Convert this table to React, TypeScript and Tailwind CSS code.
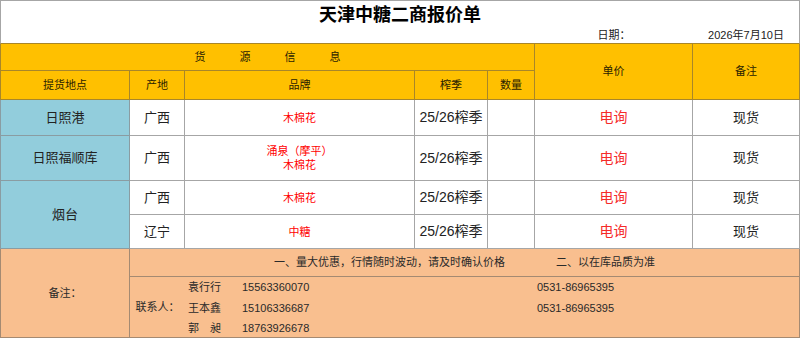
const brandRows = [
  { place: '日照港', origin: '广西', brand: ['木棉花'], h: 'h-[36px]', span: 1 },
  { place: '日照福顺库', origin: '广西', brand: ['涌泉（摩平）', '木棉花'], h: 'h-[45px]', span: 1 },
  { place: '烟台', origin: '广西', brand: ['木棉花'], h: 'h-[34px]', span: 2 },
  { place: '', origin: '辽宁', brand: ['中糖'], h: 'h-[34px]', span: 0 },
]

const contacts = [
  { name: '袁行行', mobile: '15563360070', phone: '0531-86965395', h: 'h-[21px]' },
  { name: '王本鑫', mobile: '15106336687', phone: '0531-86965395', h: 'h-[21px]' },
  { name: '郭　昶', mobile: '18763926678', phone: '', h: 'h-[18px]' },
]

export default function App() {
  return (
    <div className="w-[800px] h-[340px] overflow-hidden bg-white text-[#222] font-['Liberation_Sans','Noto_Sans_CJK_SC',sans-serif]">
      <table className="w-[800px] table-fixed border-separate border-spacing-0">
        <colgroup>
          <col className="w-[130px]" />
          <col className="w-[55px]" />
          <col className="w-[230px]" />
          <col className="w-[73px]" />
          <col className="w-[47px]" />
          <col className="w-[158px]" />
          <col className="w-[107px]" />
        </colgroup>
        <tbody>
          {/* Title */}
          <tr className="h-[28px]">
            <td colSpan={7} className="p-0 pb-[2px] border-t border-l border-r border-[#a6a6a6] text-center align-bottom text-[18px] font-bold leading-[22px] text-black">
              天津中糖二商报价单
            </td>
          </tr>
          <tr className="h-[16px]">
            <td colSpan={5} className="p-0 border-l border-b border-l-[#a6a6a6] border-b-[#a8862a]" />
            <td className="p-0 border-b border-[#a8862a] text-center text-[11px] leading-[14px] align-top">日期：</td>
            <td className="p-0 border-b border-r border-b-[#a8862a] border-r-[#a6a6a6] text-center text-[11px] leading-[14px] align-top">2026年7月10日</td>
          </tr>

          {/* Header */}
          <tr className="h-[27px] bg-[#ffc000] text-[11px] text-[#2a2200]">
            <td colSpan={5} className="p-0 border-l border-r border-b border-[#a8862a]">
              <div className="flex justify-center gap-[34px]">
                <span>货</span>
                <span>源</span>
                <span>信</span>
                <span>息</span>
              </div>
            </td>
            <td rowSpan={2} className="p-0 border-r border-b border-[#a8862a] text-center align-middle">
              单价
            </td>
            <td rowSpan={2} className="p-0 border-r border-b border-[#a8862a] text-center align-middle">
              备注
            </td>
          </tr>
          <tr className="h-[29px] bg-[#ffc000] text-[11px] text-[#2a2200] text-center">
            <td className="p-0 border-l border-r border-b border-[#a8862a]">提货地点</td>
            <td className="p-0 border-r border-b border-[#a8862a]">产地</td>
            <td className="p-0 border-r border-b border-[#a8862a]">品牌</td>
            <td className="p-0 border-r border-b border-[#a8862a]">榨季</td>
            <td className="p-0 border-r border-b border-[#a8862a]">数量</td>
          </tr>

          {/* Rows */}
          {brandRows.map((r, i) => (
            <tr key={i} className={`${r.h} text-center`}>
              {r.span > 0 && (
                <td rowSpan={r.span} className="p-0 border-l border-r border-b border-[#8a9ca2] bg-[#92cddc] text-[13px]">
                  {r.place}
                </td>
              )}
              <td className="p-0 border-r border-b border-[#a6a6a6] text-[13px]">{r.origin}</td>
              <td className="p-0 border-r border-b border-[#a6a6a6] text-[11px] leading-[14px] text-[#ff0000]">
                {r.brand.map((b) => (
                  <div key={b}>{b}</div>
                ))}
              </td>
              <td className="p-0 border-r border-b border-[#a6a6a6] text-[14px]">25/26榨季</td>
              <td className="p-0 border-r border-b border-[#a6a6a6]" />
              <td className="p-0 border-r border-b border-[#a6a6a6] text-[14px] text-[#f52a2a]">电询</td>
              <td className="p-0 border-r border-b border-[#a6a6a6] text-[13px]">现货</td>
            </tr>
          ))}

          {/* Footer */}
          <tr className="h-[28px] bg-[#f9bf8f] text-[11px] text-[#2a2a2a]">
            <td rowSpan={2} className="p-0 border-l border-r border-b border-[#a58a72] text-center">
              备注：
            </td>
            <td colSpan={6} className="p-0 border-r border-b border-[#a58a72]">
              <div className="flex justify-center gap-[51px]">
                <span>一、量大优惠，行情随时波动，请及时确认价格</span>
                <span>二、以在库品质为准</span>
              </div>
            </td>
          </tr>
          <tr className="h-[60px] bg-[#f9bf8f] text-[11px] text-[#2a2a2a]">
            <td colSpan={6} className="p-0 border-r border-b border-[#a58a72]">
              <div className="flex items-center">
                <div className="w-[55px] text-center">联系人：</div>
                <div className="flex flex-col pl-[3px]">
                  {contacts.map((c) => (
                    <div key={c.mobile} className={`flex ${c.h} items-center`}>
                      <span className="w-[54px]">{c.name}</span>
                      <span className="w-[295px]">{c.mobile}</span>
                      <span>{c.phone}</span>
                    </div>
                  ))}
                </div>
              </div>
            </td>
          </tr>
        </tbody>
      </table>
    </div>
  )
}
